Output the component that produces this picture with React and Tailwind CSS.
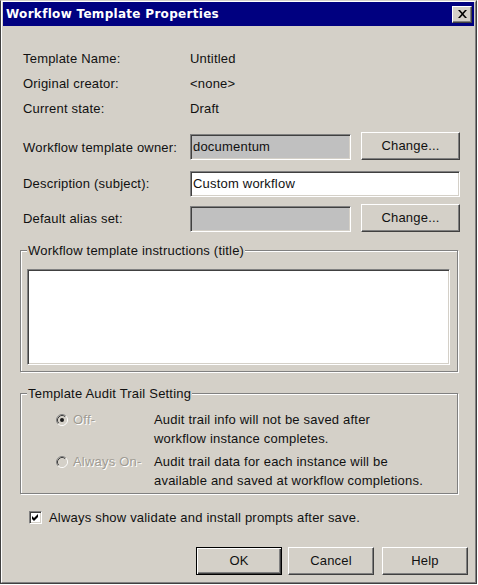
import React from 'react';

const raised = 'border border-t-white border-l-white border-b-[#404040] border-r-[#404040] shadow-[inset_-1px_-1px_0_#808080]';
const sunken = 'border border-t-[#808080] border-l-[#808080] border-b-white border-r-white shadow-[inset_1px_1px_0_#404040,inset_-1px_-1px_0_#d4d0c8]';
const etched = 'border border-[#808080] shadow-[inset_1px_1px_0_#fff,1px_1px_0_#fff]';

function Radio({ checked }) {
  return (
    <svg width="12" height="12" viewBox="0 0 12 12" className="shrink-0">
      <circle cx="6" cy="6" r="5" fill="#d4d0c8" />
      <path d="M2.11 9.89 A5.5 5.5 0 0 1 9.89 2.11" fill="none" stroke="#808080" />
      <path d="M9.89 2.11 A5.5 5.5 0 0 1 2.11 9.89" fill="none" stroke="#fff" />
      <path d="M2.82 9.18 A4.5 4.5 0 0 1 9.18 2.82" fill="none" stroke="#404040" />
      <path d="M9.18 2.82 A4.5 4.5 0 0 1 2.82 9.18" fill="none" stroke="#d4d0c8" />
      {checked && <circle cx="6" cy="6" r="2" fill="#1a1a1a" />}
    </svg>
  );
}

function Checkbox() {
  return (
    <div className={`w-[13px] h-[13px] bg-white ${sunken} flex items-center justify-center shrink-0`}>
      <svg width="7" height="7" viewBox="0 0 7 7">
        <path d="M0 2 L2 4 L6 0 L6 3 L2 7 L0 5 Z" fill="#000" />
      </svg>
    </div>
  );
}

function Button({ children, isDefault, className = '' }) {
  if (isDefault) {
    return (
      <div className={`h-[28px] border border-black flex ${className}`}>
        <div className="flex-1 flex items-center justify-center shadow-[inset_1px_1px_0_#fff,inset_-1px_-1px_0_#404040,inset_-2px_-2px_0_#808080]">
          {children}
        </div>
      </div>
    );
  }
  return (
    <div className={`h-[28px] flex items-center justify-center ${raised} ${className}`}>
      {children}
    </div>
  );
}

function GroupLabel({ children }) {
  return <div className="-mt-[8px] ml-[6px] w-fit px-[1px] bg-[#d4d0c8] leading-[15px]">{children}</div>;
}

export default function App() {
  return (
    <div className="w-[478px] h-[585px] bg-white font-['Liberation_Sans',Arial,sans-serif] text-[13px] tracking-[0.2px] text-[#111]">
      <div className="w-[477px] h-[584px] border border-t-[#d4d0c8] border-l-[#404040] border-r-[#404040] border-b-[#404040]">
        <div className="h-full border border-t-white border-l-white border-r-[#808080] border-b-[#808080] bg-[#d4d0c8] px-[1px]">
          {/* Title bar */}
          <div className="h-[24px] bg-[#000080] flex items-center justify-between pl-[3px] pr-[2px]">
            <span className="font-['DejaVu_Sans',sans-serif] font-bold text-[12px] text-white tracking-[0.3px]">
              Workflow Template Properties
            </span>
            <div className={`w-[20px] h-[17px] bg-[#d4d0c8] flex items-center justify-center ${raised}`}>
              <svg width="9" height="8" viewBox="0 0 9 8">
                <path d="M0 0 L2 0 L4.5 2.8 L7 0 L9 0 L5.5 4 L9 8 L7 8 L4.5 5.2 L2 8 L0 8 L3.5 4 Z" fill="#000" />
              </svg>
            </div>
          </div>

          <div className="pl-[17px]">
            {/* Info rows */}
            <div className="mt-[20px]">
              {[
                ['Template Name:', 'Untitled'],
                ['Original creator:', '<none>'],
                ['Current state:', 'Draft'],
              ].map(([label, value]) => (
                <div key={label} className="h-[25px] flex items-center">
                  <span className="w-[170px] pl-[3px]">{label}</span>
                  <span>{value}</span>
                </div>
              ))}
            </div>

            {/* Owner */}
            <div className="mt-[11px] h-[28px] flex">
              <span className="w-[170px] pl-[3px] self-center pt-[3px]">Workflow template owner:</span>
              <div className={`w-[161px] h-[26px] self-end bg-[#c0c0c0] ${sunken} flex items-center pl-[2px]`}>
                documentum
              </div>
              <Button className="ml-[10px] w-[99px]">Change...</Button>
            </div>

            {/* Description */}
            <div className="mt-[11px] h-[26px] flex items-center">
              <span className="w-[170px] pl-[3px]">Description (subject):</span>
              <div className={`w-[270px] h-[26px] bg-white ${sunken} flex items-center pl-[2px]`}>
                Custom workflow
              </div>
            </div>

            {/* Alias */}
            <div className="mt-[7px] h-[28px] flex">
              <span className="w-[170px] pl-[3px] self-center pt-[2px]">Default alias set:</span>
              <div className={`w-[161px] h-[26px] self-end bg-[#c0c0c0] ${sunken}`} />
              <Button className="ml-[10px] w-[99px]">Change...</Button>
            </div>

            {/* Instructions group */}
            <div className={`mt-[18px] w-[438px] h-[122px] ${etched}`}>
              <GroupLabel>Workflow template instructions (title)</GroupLabel>
              <div className={`mt-[11px] ml-[6px] w-[423px] h-[96px] bg-white ${sunken}`} />
            </div>

            {/* Audit trail group */}
            <div className={`mt-[21px] w-[438px] h-[101px] ${etched}`}>
              <GroupLabel>Template Audit Trail Setting</GroupLabel>
              <div className="mt-[9px] grid grid-cols-[133px_1fr] gap-y-[4px] leading-[19px]">
                <div className="flex items-center pl-[35px] h-[19px] gap-[5px] text-[#a09c94] [text-shadow:1px_1px_0_#fff]">
                  <Radio checked />
                  <span>Off-</span>
                </div>
                <div>
                  Audit trail info will not be saved after
                  <br />
                  workflow instance completes.
                </div>
                <div className="flex items-center pl-[35px] h-[19px] gap-[5px] text-[#a09c94] [text-shadow:1px_1px_0_#fff]">
                  <Radio />
                  <span>Always On-</span>
                </div>
                <div>
                  Audit trail data for each instance will be
                  <br />
                  available and saved at workflow completions.
                </div>
              </div>
            </div>

            {/* Checkbox */}
            <div className="mt-[16px] ml-[9px] h-[15px] flex items-center gap-[7px]">
              <Checkbox />
              <span>Always show validate and install prompts after save.</span>
            </div>

            {/* Buttons */}
            <div className="mt-[22px] flex ml-[176px]">
              <Button isDefault className="w-[86px]">OK</Button>
              <Button className="ml-[6px] w-[86px]">Cancel</Button>
              <Button className="ml-[8px] w-[86px]">Help</Button>
            </div>
          </div>
        </div>
      </div>
    </div>
  );
}
